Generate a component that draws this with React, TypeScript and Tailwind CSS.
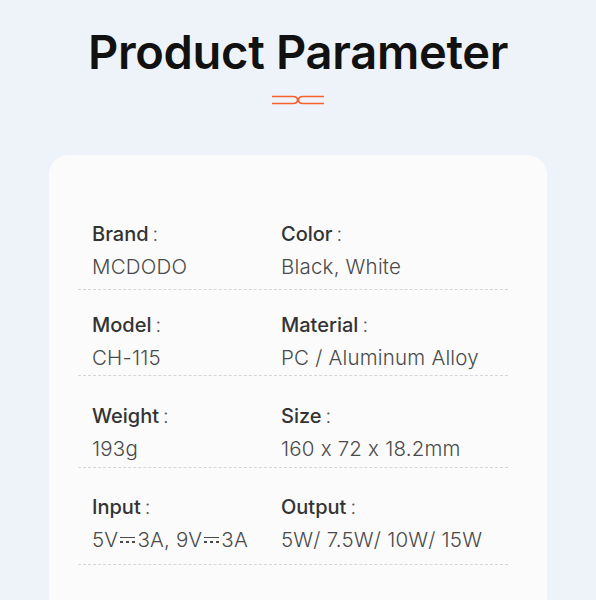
import * as React from "react";

type Param = { label: string; value: React.ReactNode };

// DC symbol: solid bar over a dashed bar
function Dc() {
  return (
    <span className="inline-flex flex-col justify-center gap-[3px] w-[15px] mx-[2px] align-middle -mt-[3px]">
      <span className="block h-[1.5px] bg-[#4a4a4a]" />
      <span className="flex justify-between">
        <span className="block w-[3px] h-[1.5px] bg-[#4a4a4a]" />
        <span className="block w-[3px] h-[1.5px] bg-[#4a4a4a]" />
        <span className="block w-[3px] h-[1.5px] bg-[#4a4a4a]" />
      </span>
    </span>
  );
}

const rows: [Param, Param][] = [
  [
    { label: "Brand", value: "MCDODO" },
    { label: "Color", value: "Black, White" },
  ],
  [
    { label: "Model", value: "CH-115" },
    { label: "Material", value: "PC / Aluminum Alloy" },
  ],
  [
    { label: "Weight", value: "193g" },
    { label: "Size", value: "160 x 72 x 18.2mm" },
  ],
  [
    { label: "Input", value: (
      <>
        5V<Dc />3A, 9V<Dc />3A
      </>
    ) },
    { label: "Output", value: "5W/ 7.5W/ 10W/ 15W" },
  ],
];

// per-row spacing so the dashed rules land where the picture has them
const rowSpace = [
  "pb-[8px] mb-[21px]",
  "pb-[3px] mb-[26px]",
  "pb-[4px] mb-[25px]",
  "pb-[10px] mb-[21px]",
];

function Cell({ p }: { p: Param }) {
  return (
    <div className="flex flex-col gap-[5px]">
      <div className="text-[20px] leading-[28px] font-medium text-[#333333]">
        {p.label}
        <span className="ml-[4px] font-light text-[#555555]">:</span>
      </div>
      <div className="text-[20.5px] leading-[28px] font-light text-[#4a4a4a] whitespace-nowrap tracking-[0.2px]">
        {p.value}
      </div>
    </div>
  );
}

export default function App() {
  return (
    <div
      className="h-[600px] overflow-hidden bg-[#eef3fa] flex flex-col items-center [font-feature-settings:'calt'_0]"
      style={{ fontFamily: "Inter, 'Noto Sans', sans-serif" }}
    >
      <h1 className="shrink-0 mt-[28px] text-[47px] leading-none font-semibold text-[#111111] tracking-[-0.3px]">
        Product Parameter
      </h1>

      {/* ornament */}
      <svg width="52" height="12" viewBox="0 0 52 12" className="shrink-0 mt-[19px]" fill="none">
        <path
          d="M0 2.5 H21 Q25.5 2.5 25.5 6 Q25.5 9.5 21 9.5 H0"
          stroke="#f5622c"
          strokeWidth="1.6"
        />
        <path
          d="M52 2.5 H31 Q26.5 2.5 26.5 6 Q26.5 9.5 31 9.5 H52"
          stroke="#f5622c"
          strokeWidth="1.6"
        />
      </svg>

      <div className="shrink-0 mt-[49px] w-[498px] h-[480px] rounded-[20px] bg-[#fbfbfb] pt-[65px] pl-[29px] pr-[39px]">
        {rows.map((r, i) => (
          <div
            key={i}
            className={`grid grid-cols-[189px_1fr] pl-[14px] border-b border-dashed border-[#d6d6d6] ${rowSpace[i]}`}
          >
            <Cell p={r[0]} />
            <Cell p={r[1]} />
          </div>
        ))}
      </div>
    </div>
  );
}
